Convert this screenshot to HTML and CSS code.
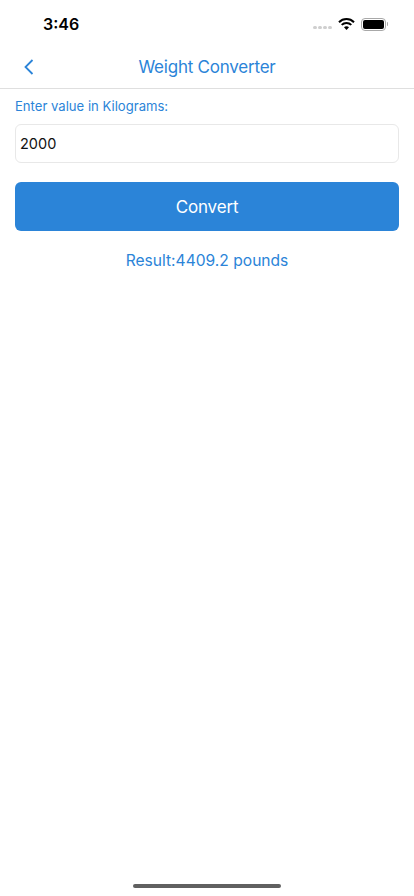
FILE: index.html
```html
<!DOCTYPE html>
<html lang="en">
<head>
<meta charset="utf-8">
<title>Weight Converter</title>
<link rel="stylesheet" href="styles.css">
</head>
<body>
<div class="screen">
  <div class="status">
    <span class="time">3:46</span>
    <div class="status-icons">
      <div class="dots"><i></i><i></i><i></i><i></i></div>
      <svg class="wifi" width="17" height="12" viewBox="0 0 17 12"><path d="M1 4.2a10.6 10.6 0 0 1 15 0" fill="none" stroke="#000" stroke-width="2"/><path d="M3.7 6.9a6.8 6.8 0 0 1 9.6 0" fill="none" stroke="#000" stroke-width="2"/><path d="M6 9.3a3.4 3.4 0 0 1 5 0L8.5 12z" fill="#000"/></svg>
      <div class="battery"><div class="battery-body"><div class="battery-fill"></div></div><div class="battery-cap"></div></div>
    </div>
  </div>
  <header class="nav">
    <svg class="back" width="10" height="16" viewBox="0 0 10 16"><path d="M8.5 1 1.5 8l7 7" fill="none" stroke="#2b84d8" stroke-width="1.8"/></svg>
    <h1 class="title">Weight Converter</h1>
  </header>
  <main class="content">
    <label class="label" for="kg">Enter value in Kilograms:</label>
    <input class="field" id="kg" type="text" value="2000">
    <button class="convert" type="button">Convert</button>
    <p class="result">Result:4409.2 pounds</p>
  </main>
  <div class="home"></div>
</div>
</body>
</html>
```
FILE: styles.css
```css
* { box-sizing: border-box; }
html, body { margin: 0; padding: 0; background: #fff; }
body { font-family: Inter, "Liberation Sans", sans-serif; }
.screen { width: 414px; height: 896px; display: flex; flex-direction: column; background: #fff; }
.status { height: 44px; flex: none; display: flex; justify-content: space-between; align-items: center; padding: 4px 26px 0 43px; }
.time { font-size: 16px; font-weight: 600; color: #000; }
.status-icons { display: flex; align-items: center; gap: 6px; }
.dots { display: flex; gap: 1.5px; margin-top: 7px; }
.dots i { width: 3.5px; height: 3.5px; border-radius: 50%; background: #cfcfcf; }
.wifi { display: block; margin-bottom: 1px; }
.battery { display: flex; align-items: center; gap: 1px; }
.battery-body { width: 25px; height: 13px; border: 1px solid #a8a8a8; border-radius: 4px; padding: 1px; }
.battery-fill { height: 100%; background: #000; border-radius: 2px; }
.battery-cap { width: 1.5px; height: 4px; background: #a8a8a8; border-radius: 0 1px 1px 0; }
.nav { height: 45px; flex: none; display: flex; align-items: center; justify-content: center; position: relative; padding-top: 2px; border-bottom: 1px solid #dfdfdf; }
.back { position: absolute; left: 24px; top: 15px; }
.title { margin: 0; font-size: 17px; font-weight: 400; letter-spacing: -0.22px; color: #2b84d8; }
.content { flex: 1; display: flex; flex-direction: column; padding: 8px 15px 0; }
.label { font-size: 13.1px; line-height: 18px; color: #2b84d8; }
.field { margin-top: 9px; height: 39px; width: 100%; border: 1px solid #e8e8e8; border-radius: 6px; padding: 0 4px; font: 400 14.5px Inter, "Liberation Sans", sans-serif; color: #111; background: #fff; outline: none; }
.convert { margin-top: 19px; height: 49px; width: 100%; border: 0; border-radius: 6px; padding-top: 2px; background: #2b84d8; color: #fff; font: 400 17px Inter, "Liberation Sans", sans-serif; letter-spacing: -0.15px; }
.result { margin: 20px 0 0; text-align: center; font-size: 15.6px; line-height: 20px; color: #2b84d8; }
.home { flex: none; width: 148px; height: 4px; margin: 0 auto 8px; border-radius: 2px; background: #606060; }
```
